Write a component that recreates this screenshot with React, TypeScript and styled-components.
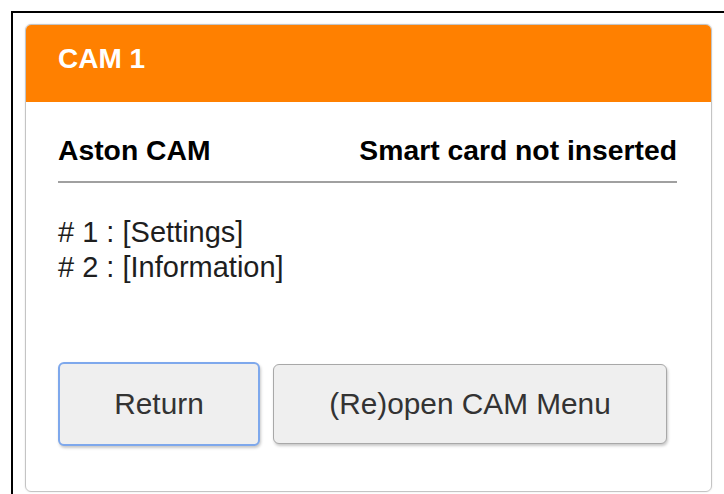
import React from "react";
import styled, { createGlobalStyle } from "styled-components";

const GlobalStyle = createGlobalStyle`
  html, body {
    margin: 0;
    padding: 0;
    background: #ffffff;
    overflow: hidden;
  }
  body {
    font-family: "Liberation Sans", Arial, sans-serif;
  }
`;

const Frame = styled.div`
  margin: 11px 0 0 11px;
  height: 483px;
  border-top: 2px solid #000;
  border-left: 2px solid #000;
  padding: 11px 0 0 12px;
  box-sizing: border-box;
`;

const Card = styled.section`
  width: 687px;
  height: 468px;
  box-sizing: border-box;
  border: 1px solid #c4c4c4;
  border-radius: 6px;
  box-shadow: 0 0 2px rgba(0, 0, 0, 0.12);
  overflow: hidden;
  display: flex;
  flex-direction: column;
`;

const Header = styled.header`
  background: #ff8000;
  color: #ffffff;
  font-weight: bold;
  font-size: 28px;
  line-height: 30px;
  padding: 19px 32px 28px;
`;

const Body = styled.div`
  padding: 31px 34px 0 32px;
  display: flex;
  flex-direction: column;
`;

const TitleRow = styled.div`
  display: flex;
  justify-content: space-between;
  align-items: baseline;
  font-weight: bold;
  font-size: 28.3px;
  line-height: 35px;
  color: #000;
  padding-bottom: 13px;
  border-bottom: 2px solid #a0a0a0;
`;

const ItemList = styled.ul`
  list-style: none;
  margin: 32px 0 0;
  padding: 0;
  font-size: 29px;
  line-height: 35px;
  color: #1e1e1e;
`;

const ButtonRow = styled.div`
  display: flex;
  align-items: center;
  gap: 13px;
  margin-top: 77px;
`;

const Button = styled.button<{ $focused?: boolean; $width: number }>`
  width: ${(p) => p.$width}px;
  height: ${(p) => (p.$focused ? 84 : 80)}px;
  box-sizing: border-box;
  font-family: "Liberation Sans", Arial, sans-serif;
  font-size: 29.8px;
  color: #333;
  background: #efefef;
  border: ${(p) => (p.$focused ? "2px solid #7ea8ec" : "1px solid #a8a8a8")};
  border-radius: 6px;
  box-shadow: 1px 2px 3px rgba(0, 0, 0, 0.22);
  padding: 0;
  cursor: pointer;
`;

export default function App() {
  return (
    <>
      <GlobalStyle />
      <Frame>
        <Card>
          <Header>CAM 1</Header>
          <Body>
            <TitleRow>
              <span>Aston CAM</span>
              <span>Smart card not inserted</span>
            </TitleRow>
            <ItemList>
              <li># 1 : [Settings]</li>
              <li># 2 : [Information]</li>
            </ItemList>
            <ButtonRow>
              <Button $focused $width={202}>Return</Button>
              <Button $width={394}>(Re)open CAM Menu</Button>
            </ButtonRow>
          </Body>
        </Card>
      </Frame>
    </>
  );
}
